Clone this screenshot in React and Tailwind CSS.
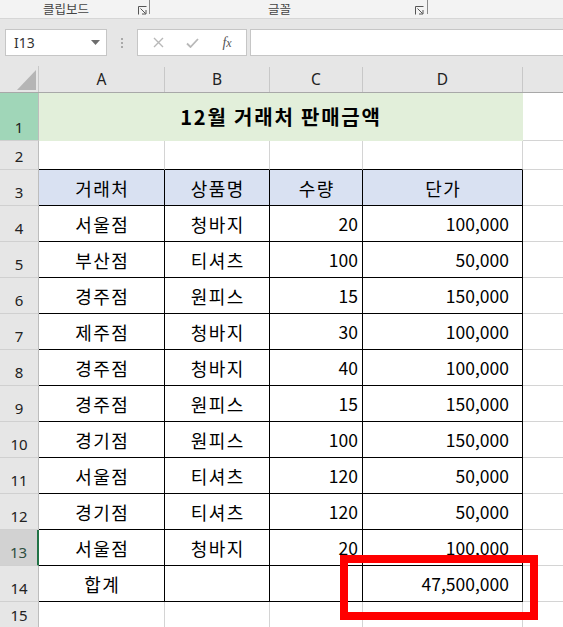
import React from "react";

const KR = { fontFamily: '"Noto Sans CJK KR", "Noto Sans", sans-serif' };
const UI = { fontFamily: '"Noto Sans", "Noto Sans CJK KR", sans-serif' };

const data = [
  ["서울점", "청바지", "20", "100,000"],
  ["부산점", "티셔츠", "100", "50,000"],
  ["경주점", "원피스", "15", "150,000"],
  ["제주점", "청바지", "30", "100,000"],
  ["경주점", "청바지", "40", "100,000"],
  ["경주점", "원피스", "15", "150,000"],
  ["경기점", "원피스", "100", "150,000"],
  ["서울점", "티셔츠", "120", "50,000"],
  ["경기점", "티셔츠", "120", "50,000"],
  ["서울점", "청바지", "20", "100,000"],
  ["합계", "", "", "47,500,000"],
];

function Launcher() {
  return (
    <svg width="9" height="9" viewBox="0 0 9 9" className="block">
      <path d="M0.5 8.5V0.5H8.5" fill="none" stroke="#555" strokeWidth="1" />
      <path d="M2.5 2.5L7.5 7.5" fill="none" stroke="#555" strokeWidth="1" />
      <path d="M8 4V8H4" fill="none" stroke="#555" strokeWidth="1" />
    </svg>
  );
}

function RowHead({ n, h, kind, pb = "pb-[3px]" }) {
  let cls = "bg-[#e6e6e6] border-r border-[#bdbdbd]";
  if (kind === "green") cls = "bg-[#a0d6b8] border-r border-[#bdbdbd]";
  if (kind === "sel") cls = "bg-[#d2d2d2] border-r-2 border-r-[#217346]";
  return (
    <div
      className={`w-[39px] shrink-0 flex items-end justify-center ${pb} border-b border-b-[#d0d0d0] text-[15px] leading-[20px] ${cls} ${kind === "sel" ? "text-[#2f4f3f]" : "text-[#222]"}`}
      style={{ ...UI, height: h }}
    >
      {n}
    </div>
  );
}

function Cell({ w, children, align = "center", border = "black", pr = "", bg = "", kr = false }) {
  const b = border === "black" ? "border-r-black border-b-black" : "border-r-[#d4d4d4] border-b-[#d4d4d4]";
  const al = align === "right" ? "justify-end" : "justify-center";
  const t = kr ? "text-[18px] tracking-[1.5px] pl-[1.5px]" : "text-[17.5px]";
  return (
    <div
      className={`${w} shrink-0 h-full flex items-center ${al} ${pr} border-r border-b ${b} ${bg} ${t} leading-[24px] text-black`}
      style={KR}
    >
      {children}
    </div>
  );
}

function ECell() {
  return <div className="flex-1 h-full border-b border-b-[#d4d4d4] bg-white" />;
}

export default function App() {
  return (
    <div className="relative w-[563px] h-[627px] overflow-hidden bg-white">
      {/* Ribbon group labels */}
      <div className="h-[19px] bg-[#f3f3f3] border-b border-[#d6d6d6] relative text-[12.5px] text-[#444]" style={KR}>
        <div className="absolute left-[43px] top-[0px] leading-[17px]">클립보드</div>
        <div className="absolute left-[138px] top-[6px]"><Launcher /></div>
        <div className="absolute left-[149px] top-0 w-px h-[14px] bg-[#8a8a8a]" />
        <div className="absolute left-[268px] top-[0px] leading-[17px]">글꼴</div>
        <div className="absolute left-[415px] top-[6px]"><Launcher /></div>
        <div className="absolute left-[427px] top-0 w-px h-[14px] bg-[#8a8a8a]" />
      </div>

      {/* Formula bar */}
      <div className="h-[47px] bg-[#e6e6e6] flex items-start pt-[10px] pl-[5px]">
        <div className="w-[102px] h-[27px] bg-white border border-[#c6c6c6] flex items-center pl-[8px] pr-[6px] justify-between">
          <span className="text-[14px] text-[#333]" style={UI}>I13</span>
          <svg width="9" height="5" viewBox="0 0 9 5"><path d="M0 0H9L4.5 5Z" fill="#6d6d6d" /></svg>
        </div>
        <div className="w-[30px] h-[27px] flex flex-col items-center justify-center gap-[2px]">
          <div className="w-[2px] h-[2px] bg-[#a9a9a9]" />
          <div className="w-[2px] h-[2px] bg-[#a9a9a9]" />
          <div className="w-[2px] h-[2px] bg-[#a9a9a9]" />
        </div>
        <div className="w-[110px] h-[27px] bg-white border border-[#c6c6c6] flex items-center">
          <div className="w-[38px] flex justify-center pl-[2px]">
            <svg width="11" height="11" viewBox="0 0 11 11"><path d="M1 1L10 10M10 1L1 10" stroke="#b8b8b8" strokeWidth="1.4" /></svg>
          </div>
          <div className="w-[32px] flex justify-center">
            <svg width="13" height="10" viewBox="0 0 13 10"><path d="M1 5.5L4.5 9L12 1" fill="none" stroke="#b8b8b8" strokeWidth="1.8" /></svg>
          </div>
          <div className="w-[38px] flex justify-center">
            <span className="text-[14px] italic text-[#555]" style={{ fontFamily: '"Liberation Serif", serif' }}>
              f<span className="text-[12px]">x</span>
            </span>
          </div>
        </div>
        <div className="ml-[3px] flex-1 h-[27px] bg-white border border-[#c6c6c6] border-r-0" />
      </div>

      {/* Column header */}
      <div className="h-[27px] flex bg-[#e6e6e6] border-b border-[#a8a8a8] text-[15.5px] text-[#222]" style={UI}>
        <div className="w-[39px] shrink-0 relative border-r border-[#c8c8c8]">
          <svg className="absolute left-[17px] top-[4px]" width="19" height="20" viewBox="0 0 19 20">
            <path d="M0 20H19V0Z" fill="#b5b5b5" />
          </svg>
        </div>
        {[["A", "w-[126px]"], ["B", "w-[105px]"], ["C", "w-[93px]"], ["D", "w-[160px]"]].map(([l, w]) => (
          <div key={l} className={`${w} shrink-0 flex items-center justify-center border-r border-[#c8c8c8] mt-[1px]`}>{l}</div>
        ))}
        <div className="flex-1" />
      </div>

      {/* Row 1 */}
      <div className="h-[48px] flex">
        <RowHead n="1" h={48} kind="green" />
        <div className="w-[484px] shrink-0 bg-[#e2efda] flex items-center justify-center font-bold text-[20px] tracking-[1.8px] text-black" style={KR}>
          12월 거래처 판매금액
        </div>
        <div className="flex-1 border-b border-b-[#d4d4d4]" />
      </div>

      {/* Row 2 */}
      <div className="h-[29px] flex">
        <RowHead n="2" h={29} />
        <div className="w-[126px] shrink-0 border-r border-r-[#d4d4d4] border-b border-b-black" />
        <div className="w-[105px] shrink-0 border-r border-r-[#d4d4d4] border-b border-b-black" />
        <div className="w-[93px] shrink-0 border-r border-r-[#d4d4d4] border-b border-b-black" />
        <div className="w-[160px] shrink-0 border-r border-r-[#d4d4d4] border-b border-b-black" />
        <ECell />
      </div>

      {/* Row 3 header */}
      <div className="h-[36px] flex">
        <RowHead n="3" h={36} />
        <Cell w="w-[126px]" bg="bg-[#d9e1f2]" kr>거래처</Cell>
        <Cell w="w-[105px]" bg="bg-[#d9e1f2]" kr>상품명</Cell>
        <Cell w="w-[93px]" bg="bg-[#d9e1f2]" kr>수량</Cell>
        <Cell w="w-[160px]" bg="bg-[#d9e1f2]" kr>단가</Cell>
        <ECell />
      </div>

      {/* Data rows */}
      {data.map((r, i) => (
        <div key={i} className="h-[36px] flex">
          <RowHead n={String(i + 4)} h={36} kind={i + 4 === 13 ? "sel" : undefined} />
          <Cell w="w-[126px]" kr>{r[0]}</Cell>
          <Cell w="w-[105px]" kr>{r[1]}</Cell>
          <Cell w="w-[93px]" align="right" pr="pr-[4px]">{r[2]}</Cell>
          <Cell w="w-[160px]" align="right" pr="pr-[13px]">{r[3]}</Cell>
          <ECell />
        </div>
      ))}

      {/* Row 15 */}
      <div className="h-[36px] flex">
        <RowHead n="15" h={36} pb="pb-[12px]" />
        <Cell w="w-[126px]" border="gray" />
        <Cell w="w-[105px]" border="gray" />
        <Cell w="w-[93px]" border="gray" />
        <Cell w="w-[160px]" border="gray" />
        <ECell />
      </div>

      {/* Red highlight box */}
      <div className="absolute left-[340px] top-[555px] w-[198px] h-[65px] border-[8px] border-[#ff0000]" />
    </div>
  );
}
